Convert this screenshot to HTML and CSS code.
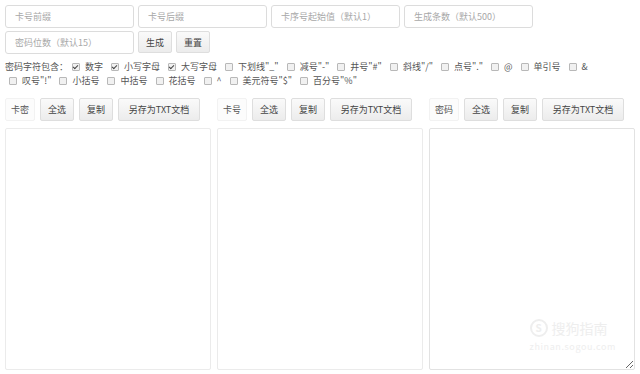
FILE: index.html
```html
<!DOCTYPE html>
<html lang="zh-CN">
<head>
  <meta charset="UTF-8" />
  <meta name="viewport" content="width=device-width, initial-scale=1.0" />
  <title>卡密生成器</title>
  <link rel="stylesheet" href="styles.css">
</head>
<body>

  <!-- Settings -->
  <div class="row">
    <input type="text" class="field" placeholder="卡号前缀" />
    <input type="text" class="field" placeholder="卡号后缀" />
    <input type="text" class="field" placeholder="卡序号起始值（默认1）" />
    <input type="text" class="field" placeholder="生成条数（默认500）" />
  </div>
  <div class="row row-second">
    <input type="text" class="field" placeholder="密码位数（默认15）" />
    <button class="btn btn-small">生成</button>
    <button class="btn btn-small">重置</button>
  </div>

  <!-- Password characters -->
  <div class="chars">
    <span class="chars-title">密码字符包含：</span>
    <label class="char"><input type="checkbox" checked />数字</label>
    <label class="char"><input type="checkbox" checked />小写字母</label>
    <label class="char"><input type="checkbox" checked />大写字母</label>
    <label class="char"><input type="checkbox" />下划线"_"</label>
    <label class="char"><input type="checkbox" />减号"-"</label>
    <label class="char"><input type="checkbox" />井号"#"</label>
    <label class="char"><input type="checkbox" />斜线"/"</label>
    <label class="char"><input type="checkbox" />点号"."</label>
    <label class="char"><input type="checkbox" />@</label>
    <label class="char"><input type="checkbox" />单引号</label>
    <label class="char"><input type="checkbox" />&amp;</label>
    <label class="char"><input type="checkbox" />叹号"!"</label>
    <label class="char"><input type="checkbox" />小括号</label>
    <label class="char"><input type="checkbox" />中括号</label>
    <label class="char"><input type="checkbox" />花括号</label>
    <label class="char"><input type="checkbox" />^</label>
    <label class="char"><input type="checkbox" />美元符号"$"</label>
    <label class="char"><input type="checkbox" />百分号"%"</label>
  </div>

  <!-- Output -->
  <div class="outputs">
    <div class="output">
      <div class="tools">
        <span class="btn btn-label">卡密</span>
        <button class="btn">全选</button>
        <button class="btn">复制</button>
        <button class="btn btn-save">另存为TXT文档</button>
      </div>
      <textarea class="result"></textarea>
    </div>
    <div class="output">
      <div class="tools">
        <span class="btn btn-label">卡号</span>
        <button class="btn">全选</button>
        <button class="btn">复制</button>
        <button class="btn btn-save">另存为TXT文档</button>
      </div>
      <textarea class="result"></textarea>
    </div>
    <div class="output">
      <div class="tools">
        <span class="btn btn-label">密码</span>
        <button class="btn">全选</button>
        <button class="btn">复制</button>
        <button class="btn btn-save">另存为TXT文档</button>
      </div>
      <textarea class="result result-last"></textarea>
    </div>
  </div>

  <div class="watermark">
    <div class="mark-top"><span class="mark-logo">S</span>搜狗指南</div>
    <div class="mark-url">zhinan.sogou.com</div>
  </div>

</body>
</html>
```

FILE: styles.css
```css
body {
  margin: 0;
  padding: 5px;
  font-family: "Microsoft YaHei", "Noto Sans CJK SC", sans-serif;
  font-size: 9px;
  color: #555;
  background: #fff;
  position: relative;
  height: 374px;
  box-sizing: border-box;
  overflow: hidden;
}

.row {
  display: flex;
  gap: 4px;
}

.row-second {
  margin-top: 3px;
}

.field {
  box-sizing: border-box;
  width: 129px;
  height: 23px;
  padding: 0 9px;
  border: 1px solid #dcdcdc;
  border-radius: 3px;
  font-family: inherit;
  font-size: 9px;
  color: #555;
  outline: none;
}

.field::placeholder {
  color: #a8a8a8;
}

.btn {
  box-sizing: border-box;
  height: 23px;
  padding: 0 7px;
  border: 1px solid #dedede;
  border-radius: 2px;
  background: linear-gradient(#fafafa, #ececec);
  font-family: inherit;
  font-size: 9px;
  color: #444;
  display: inline-flex;
  align-items: center;
  justify-content: center;
  cursor: pointer;
}

.btn-small {
  width: 34px;
  height: 22px;
  padding: 0;
}

.chars {
  display: flex;
  flex-wrap: wrap;
  align-items: center;
  margin-top: 6px;
  line-height: 14px;
  width: 612px;
}

.char {
  display: inline-flex;
  align-items: center;
  margin-left: 4px;
  margin-right: 4px;
  white-space: nowrap;
}

.char input {
  appearance: none;
  box-sizing: border-box;
  width: 8px;
  height: 8px;
  margin: 0 5px 0 0;
  border: 1px solid #b8b8b8;
  border-radius: 1px;
  background: #f1f1f1;
  position: relative;
}

.char input:checked::after {
  content: "";
  position: absolute;
  left: 1px;
  top: 0;
  width: 2px;
  height: 4px;
  border: solid #444;
  border-width: 0 1px 1px 0;
  transform: rotate(45deg);
}

.outputs {
  display: flex;
  gap: 6px;
  margin-top: 10px;
}

.output {
  width: 206px;
}

.tools {
  display: flex;
  gap: 5px;
}

.btn-label {
  width: 30px;
  padding: 0;
  background: #fcfcfc;
  border-color: #f2f2f2;
  color: #555;
}

.tools .btn:not(.btn-label):not(.btn-save) {
  width: 34px;
  padding: 0;
}

.btn-save {
  width: 82px;
  padding: 0;
}

.result {
  display: block;
  box-sizing: border-box;
  width: 100%;
  height: 242px;
  margin-top: 7px;
  border: 1px solid #ebebeb;
  border-radius: 2px;
  resize: none;
  outline: none;
}

.result-last {
  resize: vertical;
  border-color: #e2e2e2;
}

.watermark {
  position: absolute;
  right: 24px;
  bottom: 22px;
  color: #eeeeee;
  text-align: center;
}

.mark-top {
  display: flex;
  align-items: center;
  gap: 4px;
  font-size: 14px;
  line-height: 20px;
}

.mark-logo {
  width: 14px;
  height: 14px;
  border: 2px solid #eeeeee;
  border-radius: 50%;
  font-size: 10px;
  line-height: 14px;
  font-weight: bold;
}

.mark-url {
  margin-top: 3px;
  font-size: 9px;
  line-height: 11px;
  letter-spacing: 0.6px;
}
```
